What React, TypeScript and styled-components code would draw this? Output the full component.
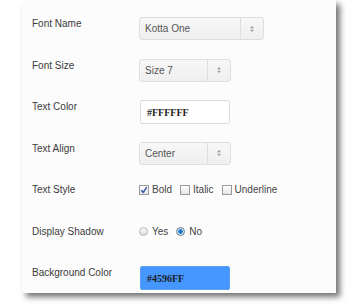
import React from 'react'
import styled, { createGlobalStyle } from 'styled-components'

const Global = createGlobalStyle`
  html, body { margin: 0; padding: 0; background: #fff; }
  body { font-family: "Liberation Sans", Arial, sans-serif; }
`

const Page = styled.div`
  width: 347px;
  height: 304px;
  overflow: hidden;
`

const Panel = styled.div`
  margin-left: 22px;
  width: 314px;
  height: 293px;
  box-sizing: border-box;
  background: #fcfcfc;
  box-shadow: 4px 4px 6px rgba(0, 0, 0, 0.55);
  padding: 17px 0 0 10px;
  display: grid;
  grid-auto-rows: 41.5px;
`

const Row = styled.div`
  display: grid;
  grid-template-columns: 107px 1fr;
  align-items: start;
`

const Label = styled.div`
  font-size: 10px;
  line-height: 13px;
  color: #3b3b3b;
`

const SelectBox = styled.div<{ $w: number }>`
  width: ${p => p.$w}px;
  height: 23px;
  box-sizing: border-box;
  border: 1px solid #dedede;
  border-radius: 3px;
  background: linear-gradient(#f7f7f7, #efefef);
  display: flex;
  align-items: center;
  font-size: 10px;
  color: #555;
`

const SelectText = styled.span`
  flex: 1;
  padding-left: 5px;
`

const SelectArrow = styled.span`
  width: 22px;
  height: 100%;
  border-left: 1px solid #dedede;
  display: flex;
  align-items: center;
  justify-content: center;
`

const TextInput = styled.div<{ $bg?: string }>`
  width: 90px;
  height: 24px;
  margin-left: 1px;
  box-sizing: border-box;
  border: 1px solid ${p => (p.$bg ? '#5a9ff5' : '#dcdcdc')};
  border-radius: 2px;
  background: ${p => p.$bg || '#fff'};
  padding-left: 6px;
  display: flex;
  align-items: center;
  font-family: "Liberation Serif", "Times New Roman", serif;
  font-weight: bold;
  font-size: 10px;
  color: #1e1e1e;
`

const Options = styled.div`
  display: flex;
  align-items: center;
  height: 13px;
  font-size: 10px;
  color: #444;
`

const Option = styled.label`
  display: flex;
  align-items: center;
  margin-right: 8px;
`

const Box = styled.span`
  width: 10px;
  height: 10px;
  box-sizing: border-box;
  border: 1px solid #9a9a9a;
  background: linear-gradient(#fff, #e4e4e4);
  margin-right: 3px;
  display: flex;
  align-items: center;
  justify-content: center;
`

const Radio = styled.span<{ $on?: boolean }>`
  width: 9px;
  height: 9px;
  box-sizing: border-box;
  border-radius: 50%;
  border: 1px solid ${p => (p.$on ? '#6a7f95' : '#b4b4b4')};
  background: ${p => (p.$on ? 'radial-gradient(circle, #1f78c8 0 2px, #dde6ee 2.5px)' : 'linear-gradient(#fbfbfb, #dcdcdc)')};
  margin-right: 4px;
`

const Arrows = () => (
  <svg width="6" height="8" viewBox="0 0 6 8">
    <path d="M3 1 L5 3.3 H1 Z M3 7 L5 4.7 H1 Z" fill="#999" />
  </svg>
)

const Select = ({ value, width }: { value: string; width: number }) => (
  <SelectBox $w={width}>
    <SelectText>{value}</SelectText>
    <SelectArrow><Arrows /></SelectArrow>
  </SelectBox>
)

const Check = () => (
  <svg width="8" height="8" viewBox="0 0 8 8">
    <path d="M1.2 4.2 L3.2 6.4 L6.8 1.2" stroke="#2d4fa8" strokeWidth="1.4" fill="none" />
  </svg>
)

export default function App() {
  return (
    <Page>
      <Global />
      <Panel>
        <Row>
          <Label>Font Name</Label>
          <Select value="Kotta One" width={125} />
        </Row>
        <Row>
          <Label>Font Size</Label>
          <Select value="Size 7" width={92} />
        </Row>
        <Row>
          <Label>Text Color</Label>
          <TextInput>#FFFFFF</TextInput>
        </Row>
        <Row>
          <Label>Text Align</Label>
          <Select value="Center" width={92} />
        </Row>
        <Row>
          <Label>Text Style</Label>
          <Options>
            <Option><Box><Check /></Box>Bold</Option>
            <Option><Box />Italic</Option>
            <Option><Box />Underline</Option>
          </Options>
        </Row>
        <Row>
          <Label>Display Shadow</Label>
          <Options>
            <Option><Radio />Yes</Option>
            <Option><Radio $on />No</Option>
          </Options>
        </Row>
        <Row>
          <Label>Background Color</Label>
          <TextInput $bg="#4596FF">#4596FF</TextInput>
        </Row>
      </Panel>
    </Page>
  )
}
